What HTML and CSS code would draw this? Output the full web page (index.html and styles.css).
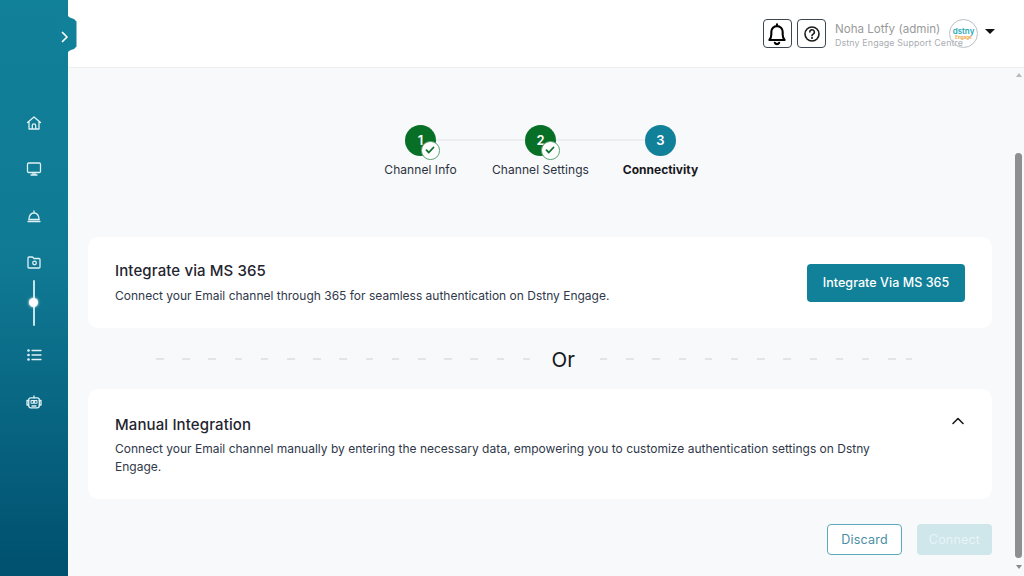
FILE: index.html
```html
<!DOCTYPE html>
<html lang="en">
<head>
<meta charset="utf-8">
<title>Connectivity</title>
<link rel="stylesheet" href="styles.css">
</head>
<body>
<div class="app">
  <aside class="sidebar">
    <div class="toggle"><svg width="10" height="12" viewBox="0 0 10 12"><path d="M2.500 1.500L7 6l-4.500 4.500" class="wh"/></svg></div>
    <nav class="nav">
      <svg class="nav-icon" width="16" height="16" viewBox="0 0 16 16"><path d="M1.500 7.500L8 2l6.500 5.500M3 6.500V14h10V6.500M6.300 14v-3.500a1.700 1.700 0 0 1 3.400 0V14" class="wh"/></svg>
      <svg class="nav-icon" width="16" height="16" viewBox="0 0 16 16"><rect x="1.500" y="2" width="13" height="9.500" rx="1.200" class="wh"/><path d="M5 14h6M7 11.500V14M9 11.500V14" class="wh"/></svg>
      <svg class="nav-icon" width="16" height="16" viewBox="0 0 16 16"><path d="M2.800 11.500C3.200 7.500 5.300 5 8 5s4.800 2.500 5.200 6.500zM2 13.500h12M8 5V3" class="wh"/></svg>
      <svg class="nav-icon" width="16" height="16" viewBox="0 0 16 16"><path d="M2 4a1 1 0 0 1 1-1h3.500l1.500 1.500h5a1 1 0 0 1 1 1V13a1 1 0 0 1-1 1H3a1 1 0 0 1-1-1z" class="wh"/><circle cx="8.500" cy="9" r="1.800" class="wh"/></svg>
      <div class="slider"><span class="knob"></span></div>
      <svg class="nav-icon" width="16" height="16" viewBox="0 0 16 16"><path d="M6 3.500h9M6 8h9M6 12.500h9" class="wh"/><circle cx="2.500" cy="3.500" r="1.300" fill="#dff1f5"/><circle cx="2.500" cy="8" r="1.300" fill="#dff1f5"/><circle cx="2.500" cy="12.500" r="1.300" fill="#dff1f5"/></svg>
      <svg class="nav-icon" width="16" height="16" viewBox="0 0 16 16"><rect x="2.700" y="3.800" width="10.600" height="10" rx="2" class="wh"/><path d="M8 3.800V2M2.700 6.500H1v4.500h1.700M13.300 6.500H15v4.500h-1.700M6 12h4" class="wh"/><rect x="4.500" y="6" width="7" height="3.800" rx=".8" fill="#dff1f5"/><circle cx="6.300" cy="7.900" r=".9" fill="#0f6783"/><circle cx="9.700" cy="7.900" r=".9" fill="#0f6783"/></svg>
    </nav>
  </aside>
  <div class="content">
    <header class="topbar">
      <button class="icon-btn"><svg width="22" height="24" viewBox="0 0 20 22"><path d="M3 16.500c1.200-1.300 1.800-2.500 1.800-5V9a5.200 5.200 0 0 1 10.400 0v2.500c0 2.500.6 3.700 1.800 5zM8 19a2.200 2.200 0 0 0 4 0M10 2v1.500" class="bk bell"/></svg></button>
      <button class="icon-btn"><svg width="18" height="18" viewBox="0 0 18 18"><circle cx="9" cy="9" r="7" class="bk"/><path d="M6.800 7a2.300 2.300 0 1 1 3.400 2.100c-.8.500-1.200.9-1.200 1.700" class="bk"/><circle cx="9" cy="13" r="1" fill="#111"/></svg></button>
      <div class="user">
        <div class="user-name">Noha Lotfy (admin)</div>
        <div class="user-org">Dstny Engage Support Centre</div>
      </div>
      <div class="avatar"><span class="logo-a">dstny</span><span class="logo-b">Engage</span></div>
      <span class="caret"></span>
    </header>
    <div class="body">
      <main class="main">
        <ol class="steps">
          <li class="step done"><span class="dot">1<span class="tick"><svg width="10" height="10" viewBox="0 0 10 10"><path d="M1.500 5.200l2.300 2.300 4.700-5" class="ck"/></svg></span></span><span class="step-label">Channel Info</span></li>
          <li class="step done"><span class="dot">2<span class="tick"><svg width="10" height="10" viewBox="0 0 10 10"><path d="M1.500 5.200l2.300 2.300 4.700-5" class="ck"/></svg></span></span><span class="step-label">Channel Settings</span></li>
          <li class="step current"><span class="dot">3</span><span class="step-label">Connectivity</span></li>
        </ol>
        <section class="card card-ms">
          <div class="card-text">
            <h2 class="card-title">Integrate via MS 365</h2>
            <p class="card-desc">Connect your Email channel through 365 for seamless authentication on Dstny Engage.</p>
          </div>
          <button class="btn-primary">Integrate Via MS 365</button>
        </section>
        <div class="or"><span class="dash dash-left"></span><span class="or-text">Or</span><span class="dash dash-right"></span></div>
        <section class="card card-manual">
          <div class="card-text">
            <h2 class="card-title">Manual Integration</h2>
            <p class="card-desc">Connect your Email channel manually by entering the necessary data, empowering you to customize authentication settings on Dstny Engage.</p>
          </div>
          <svg class="chevron" width="14" height="10" viewBox="0 0 14 10"><path d="M2 7.500l5-5 5 5" class="bk"/></svg>
        </section>
        <div class="actions">
          <button class="btn-outline">Discard</button>
          <button class="btn-disabled">Connect</button>
        </div>
      </main>
      <div class="scrollbar">
        <span class="arrow-up"></span>
        <div class="track"><span class="thumb"></span></div>
        <span class="arrow-down"></span>
      </div>
    </div>
  </div>
</div>
</body>
</html>
```
FILE: styles.css
```css
* { box-sizing: border-box; }
html, body { margin: 0; height: 100%; overflow: hidden; }
body { font-family: Inter, "Noto Sans", sans-serif; color: #1d2433; background: #f8f9fb; }
button { font-family: inherit; cursor: pointer; }
svg { display: block; }

.wh { fill: none; stroke: #dff1f5; stroke-width: 1.300; stroke-linecap: round; stroke-linejoin: round; }
.bk { fill: none; stroke: #1a1a1a; stroke-width: 1.600; stroke-linecap: round; stroke-linejoin: round; }
.bell { stroke: #000; stroke-width: 1.900; }
.ck { fill: none; stroke: #0b6e2a; stroke-width: 1.800; stroke-linecap: round; stroke-linejoin: round; }

.app { display: flex; width: 1024px; height: 576px; }

.sidebar {
  position: relative; flex: 0 0 67.500px; height: 576px;
  background: linear-gradient(180deg, #118099 0%, #107a94 45%, #00506f 100%);
}
.toggle {
  position: absolute; left: 60px; top: 15px; width: 16.500px; height: 38px;
  background: #118099; display: flex; align-items: center; padding-top: 6px;
  clip-path: polygon(0 0, 7.500px 0, 9px 2px, 11px 3px, 14px 4px, 16.500px 6.500px, 16.500px 31.500px, 14px 34px, 11px 35px, 9px 36px, 7.500px 38px, 0 38px);
}
.toggle .wh { stroke: #fff; stroke-width: 1.700; }

.nav { display: flex; flex-direction: column; align-items: center; padding-top: 115px; }
.nav-icon { margin-bottom: 30.330px; flex: none; }
.nav-icon:nth-child(4) { margin-bottom: 10.500px; }
.slider {
  position: relative; width: 2px; height: 46px; background: #c7e4ea; border-radius: 1px; margin-bottom: 21px;
}
.knob {
  position: absolute; left: -3.500px; top: 18px; width: 9px; height: 9px; border-radius: 50%;
  background: #fff; box-shadow: 0 0 3px #fff;
}

.content { flex: 1; display: flex; flex-direction: column; min-width: 0; }

.topbar {
  flex: 0 0 68px; height: 68px; background: #fff; border-bottom: 1px solid #eef0f2;
  display: flex; align-items: center; padding: 0 29px 0 0; justify-content: flex-end;
}
.icon-btn {
  width: 29px; height: 29px; padding: 0; background: #fff; border: 1px solid #3c4650; border-radius: 4px;
  display: flex; align-items: center; justify-content: center; margin-right: 6px;
}
.icon-btn:first-child { margin-right: 5.500px; }
.user { margin-left: 3px; width: 114px; white-space: nowrap; padding-top: 2px; }
.user-name { font-size: 11.600px; line-height: 15px; color: #9a9a9a; }
.user-org { font-size: 8.900px; line-height: 11px; color: #a9adb3; letter-spacing: .12px; }
.avatar {
  position: relative; z-index: 1; width: 29px; height: 29px; border-radius: 50%; border: 1px solid #b9c0c6; background: transparent;
  display: flex; flex-direction: column; align-items: center; justify-content: center; margin-right: 7px;
}
.logo-a { font-size: 8px; line-height: 7px; color: #27a8b5; font-weight: 600; }
.logo-b { font-size: 4.500px; line-height: 5px; color: #f2a33a; font-weight: 700; }
.caret {
  width: 0; height: 0; border-left: 5px solid transparent; border-right: 5px solid transparent; border-top: 5px solid #111; margin-bottom: 4px;
}

.body { flex: 1; display: flex; min-height: 0; }
.main { flex: 1; padding: 57px 22px 0 20.500px; min-width: 0; }

.steps { list-style: none; margin: 0 0 0 272.500px; padding: 0; display: flex; height: 112px; }
.step { position: relative; width: 120px; display: flex; flex-direction: column; align-items: center; }
.step:not(:last-child)::after {
  content: ""; position: absolute; left: 60px; top: 14px; width: 120px; height: 2px; background: #eceef1;
}
.dot {
  position: relative; z-index: 1; width: 31px; height: 31px; border-radius: 50%; color: #fff;
  font-size: 13px; font-weight: 600; display: flex; align-items: center; justify-content: center; padding-bottom: 1px;
}
.done .dot { background: #086f26; }
.current .dot { background: #118099; }
.tick {
  position: absolute; left: 16px; top: 16px; width: 18.500px; height: 18.500px; border-radius: 50%;
  background: #fff; border: 1px solid #5da274; display: flex; align-items: center; justify-content: center;
}
.step-label { font-size: 12px; line-height: 16px; margin-top: 5.500px; color: #2b3240; white-space: nowrap; letter-spacing: .06px; }
.current .step-label { font-weight: 700; color: #17181c; letter-spacing: 0; }

.card { background: #fff; border-radius: 10px; display: flex; padding-left: 27px; }
.card-ms { height: 91px; align-items: center; justify-content: space-between; padding-right: 27px; }
.card-ms .card-text { padding-top: 1px; }
.card-title { margin: 0; font-size: 15px; line-height: 20px; font-weight: 500; letter-spacing: .12px; color: #1f2530; }
.card-desc { margin: 6px 0 0; font-size: 12px; line-height: 18px; color: #30384a; }
.btn-primary {
  width: 158px; height: 38px; background: #118099; color: #fff; border: 0; border-radius: 4px;
  font-size: 12.500px; font-weight: 500; letter-spacing: .05px;
}

.or { height: 61px; display: flex; align-items: center; padding: 0 80px 0 67.500px; }
.dash { height: 2px; }
.dash-left {
  flex: 1;
  background: repeating-linear-gradient(90deg, #e2e4e7 0 7.500px, transparent 7.500px 26.200px);
}
.dash-right {
  flex: 0 0 312px;
  background:
    linear-gradient(#e2e4e7, #e2e4e7) right center / 6.500px 2px no-repeat,
    repeating-linear-gradient(90deg, #e2e4e7 0 7.500px, transparent 7.500px 26.200px) left center / 300px 2px no-repeat;
}
.or-text { font-size: 20.500px; line-height: 26px; color: #12151b; margin: 2px 25px 0 22px; }

.card-manual { position: relative; height: 110px; padding-top: 26px; padding-right: 110px; }
.card-manual .card-desc { margin-top: 5px; }
.chevron { position: absolute; right: 27px; top: 26.500px; }

.actions { display: flex; justify-content: flex-end; gap: 15px; margin-top: 25px; }
.btn-outline, .btn-disabled { width: 75px; height: 31px; border-radius: 4px; font-size: 12.500px; letter-spacing: .2px; padding-bottom: 2px; }
.btn-outline { background: #fff; border: 1px solid #5ea8bc; color: #4a8ea5; }
.btn-disabled { background: #cfe6eb; border: 0; color: #e9f4f6; }

.scrollbar { flex: 0 0 10px; display: flex; flex-direction: column; align-items: center; padding: 5px 0 7px; background: #f8f9fb; }
.arrow-up, .arrow-down { width: 0; height: 0; border-left: 3px solid transparent; border-right: 3px solid transparent; flex: none; }
.arrow-up { border-bottom: 4px solid #b9b9b9; }
.arrow-down { border-top: 4px solid #8a8a8a; }
.track { flex: 1; width: 100%; padding: 76px 2px 7px 1px; display: flex; }
.thumb { flex: 1; background: #8f8f8f; border-radius: 4px; }
```
